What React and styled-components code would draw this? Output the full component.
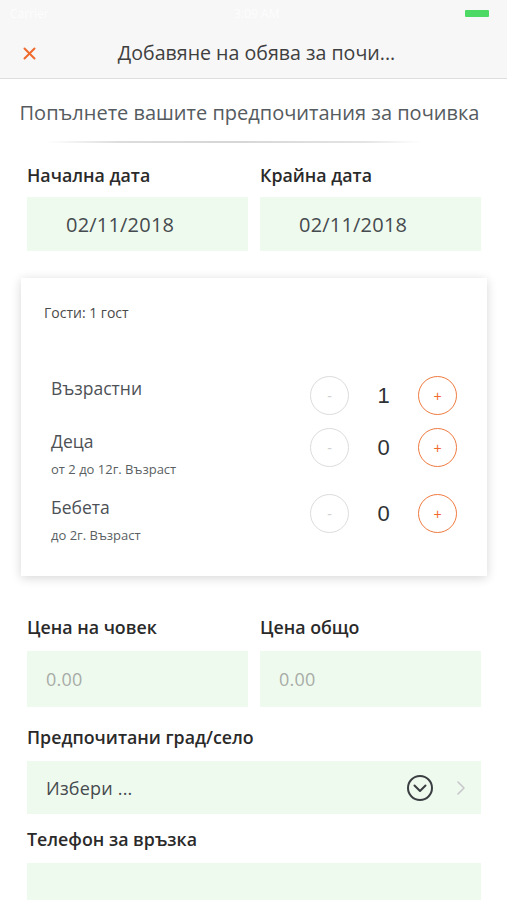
import React from "react";
import styled, { createGlobalStyle } from "styled-components";

const GlobalStyle = createGlobalStyle`
  html, body {
    margin: 0;
    padding: 0;
    background: #ffffff;
    font-family: "Open Sans", "Noto Sans", sans-serif;
  }
`;

const Screen = styled.div`
  width: 507px;
  height: 900px;
  overflow: hidden;
  background: #fff;
`;

const StatusBar = styled.div`
  height: 26px;
  background: #f7f7f7;
  display: flex;
  align-items: center;
  justify-content: space-between;
  padding: 0 8px 0 10px;
  color: #fdfdfd;
  font-size: 12px;
`;

const Battery = styled.div`
  width: 24px;
  height: 7px;
  background: #4cd964;
  border-radius: 1px;
  margin-right: 10px;
`;

const NavBar = styled.div`
  height: 52px;
  background: #f7f7f7;
  border-bottom: 1px solid #dedede;
  display: flex;
  align-items: center;
`;

const CloseBtn = styled.div`
  width: 58px;
  display: flex;
  justify-content: center;
  padding-top: 2px;
`;

const NavTitle = styled.div`
  flex: 1;
  text-align: center;
  margin-right: 58px;
  font-size: 19.6px;
  color: #3f3f3f;
  padding-left: 6px;
`;

const Subtitle = styled.div`
  margin-top: 20px;
  padding-right: 8px;
  text-align: center;
  font-size: 20px;
  color: #555b60;
`;

const Divider = styled.div`
  height: 2px;
  margin: 15px 86px 0 46px;
  background: linear-gradient(90deg, rgba(220,220,220,0), #dcdcdc 20%, #d6d6d6 50%, #e4e4e4 85%, rgba(230,230,230,0));
`;

const Form = styled.div`
  padding: 0 26px 0 27px;
`;

const Row = styled.div`
  display: grid;
  grid-template-columns: 1fr 1fr;
  column-gap: 12px;
`;

const Field = styled.div`
  display: flex;
  flex-direction: column;
`;

const Label = styled.div`
  font-size: 17.8px;
  font-weight: 600;
  color: #2a2a2a;
  height: 22px;
  line-height: 22px;
  margin-top: ${(p) => p.top}px;
  margin-bottom: ${(p) => p.bottom}px;
`;

const InputBox = styled.div`
  height: ${(p) => p.h || 54}px;
  background: #effaee;
  display: flex;
  align-items: center;
  padding-left: ${(p) => p.pad || 19}px;
  padding-right: 14px;
  font-size: ${(p) => (p.big ? 20 : 18)}px;
  color: ${(p) => (p.muted ? "#a7aca7" : "#454a4e")};
  letter-spacing: 0.2px;
`;

const Card = styled.div`
  margin: 27px 20px 0 21px;
  height: 298px;
  box-sizing: border-box;
  background: #fff;
  box-shadow: 0 2px 10px rgba(0, 0, 0, 0.16);
  padding: 23px 30px 0 23px;
`;

const GuestsTitle = styled.div`
  font-size: 14px;
  color: #4a4a4a;
  height: 24px;
  line-height: 24px;
  margin-bottom: 51px;
`;

const GuestRow = styled.div`
  display: flex;
  align-items: flex-start;
  justify-content: space-between;
  padding-left: 7px;
  height: ${(p) => p.h}px;
`;

const GuestInfo = styled.div`
  display: flex;
  flex-direction: column;
`;

const GuestName = styled.div`
  font-size: 17.5px;
  color: #4d5156;
  line-height: 24px;
`;

const GuestSub = styled.div`
  font-size: 13px;
  color: #5a5f63;
  line-height: 18px;
  margin-top: 7px;
`;

const Counter = styled.div`
  display: flex;
  align-items: center;
  margin-top: ${(p) => p.top}px;
`;

const RoundBtn = styled.div`
  width: 37px;
  height: 37px;
  border-radius: 50%;
  border: 1.5px solid ${(p) => (p.active ? "#ef7a3f" : "#dcdcdc")};
  color: ${(p) => (p.active ? "#ef6a2c" : "#d0d0d0")};
  display: flex;
  align-items: center;
  justify-content: center;
  font-size: 14px;
  font-family: "Liberation Sans", sans-serif;
`;

const Count = styled.div`
  width: 69px;
  text-align: center;
  font-size: 22px;
  color: #2f3235;
  font-family: "Liberation Sans", sans-serif;
`;

const SelectIcons = styled.div`
  margin-left: auto;
  display: flex;
  align-items: center;
  gap: 22px;
  padding-right: 1px;
`;

function Stepper({ value, top }) {
  return (
    <Counter top={top}>
      <RoundBtn>-</RoundBtn>
      <Count>{value}</Count>
      <RoundBtn active>+</RoundBtn>
    </Counter>
  );
}

export default function App() {
  return (
    <Screen>
      <GlobalStyle />
      <StatusBar>
        <span>Carrier</span>
        <span>3:09 AM</span>
        <Battery />
      </StatusBar>
      <NavBar>
        <CloseBtn>
          <svg width="13" height="13" viewBox="0 0 13 13">
            <path d="M1.5 1.5 L11.5 11.5 M11.5 1.5 L1.5 11.5" stroke="#ef6a2c" strokeWidth="2" strokeLinecap="round" />
          </svg>
        </CloseBtn>
        <NavTitle>Добавяне на обява за почи...</NavTitle>
      </NavBar>
      <Subtitle>Попълнете вашите предпочитания за почивка</Subtitle>
      <Divider />

      <Form>
        <Row>
          <Field>
            <Label top={21} bottom={11}>Начална дата</Label>
            <InputBox pad={39} big>02/11/2018</InputBox>
          </Field>
          <Field>
            <Label top={21} bottom={11}>Крайна дата</Label>
            <InputBox pad={39} big>02/11/2018</InputBox>
          </Field>
        </Row>
      </Form>

      <Card>
        <GuestsTitle>Гости: 1 гост</GuestsTitle>
        <GuestRow h={53}>
          <GuestInfo>
            <GuestName>Възрастни</GuestName>
          </GuestInfo>
          <Stepper value="1" top={0} />
        </GuestRow>
        <GuestRow h={66}>
          <GuestInfo>
            <GuestName>Деца</GuestName>
            <GuestSub>от 2 до 12г. Възраст</GuestSub>
          </GuestInfo>
          <Stepper value="0" top={-1} />
        </GuestRow>
        <GuestRow h={60}>
          <GuestInfo>
            <GuestName>Бебета</GuestName>
            <GuestSub>до 2г. Възраст</GuestSub>
          </GuestInfo>
          <Stepper value="0" top={-1} />
        </GuestRow>
      </Card>

      <Form>
        <Row>
          <Field>
            <Label top={40} bottom={13}>Цена на човек</Label>
            <InputBox h={56} muted>0.00</InputBox>
          </Field>
          <Field>
            <Label top={40} bottom={13}>Цена общо</Label>
            <InputBox h={56} muted>0.00</InputBox>
          </Field>
        </Row>
        <Label top={19} bottom={13}>Предпочитани град/село</Label>
        <InputBox h={53}>
          Избери ...
          <SelectIcons>
            <svg width="28" height="28" viewBox="0 0 28 28">
              <circle cx="14" cy="14" r="12" fill="none" stroke="#3a3e42" strokeWidth="2" />
              <path d="M8.5 11.5 L14 17 L19.5 11.5" fill="none" stroke="#3a3e42" strokeWidth="2" strokeLinecap="round" strokeLinejoin="round" />
            </svg>
            <svg width="10" height="16" viewBox="0 0 10 16">
              <path d="M2 2 L8 8 L2 14" fill="none" stroke="#c7c7cc" strokeWidth="1.6" strokeLinecap="round" strokeLinejoin="round" />
            </svg>
          </SelectIcons>
        </InputBox>
        <Label top={14} bottom={13}>Телефон за връзка</Label>
        <InputBox h={60} />
      </Form>
    </Screen>
  );
}
